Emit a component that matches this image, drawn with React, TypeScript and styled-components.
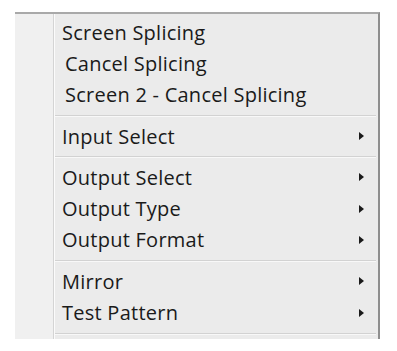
import React from "react";
import styled, { createGlobalStyle } from "styled-components";

const GlobalStyle = createGlobalStyle`
  html, body {
    margin: 0;
    padding: 0;
    background: #ffffff;
  }
  body {
    font-family: "Open Sans", "Noto Sans", sans-serif;
  }
`;

const Page = styled.div`
  width: 397px;
  height: 351px;
  padding: 12px 0 0 15px;
  box-sizing: border-box;
`;

const Menu = styled.div`
  position: relative;
  width: 365px;
  height: 327px;
  box-sizing: border-box;
  background: #ebebeb;
  border-top: 2px solid #a9a9a9;
  border-right: 2px solid #8e8e8e;
  padding: 2.5px 0 0 0;
`;

const Gutter = styled.div`
  position: absolute;
  left: 0;
  top: 0;
  bottom: 0;
  width: 38px;
  background: #f0f0f0;
  border-right: 1px solid #d4d4d4;
  box-shadow: 1px 0 0 #fbfbfb;
`;

const Item = styled.div<{ $indent?: number }>`
  position: relative;
  height: 31.3px;
  display: flex;
  align-items: center;
  justify-content: space-between;
  padding: 0 14px 0 ${(p) => 47 + (p.$indent ?? 0)}px;
  box-sizing: border-box;
  font-size: 20px;
  letter-spacing: 0.25px;
  color: #1a1a1a;
`;

const Arrow = styled.span`
  width: 0;
  height: 0;
  border-top: 4.5px solid transparent;
  border-bottom: 4.5px solid transparent;
  border-left: 5px solid #1a1a1a;
`;

const Separator = styled.div`
  position: relative;
  height: 10px;
  display: flex;
  align-items: center;
  padding: 0 2px 0 40px;
  &::after {
    content: "";
    flex: 1;
    height: 1px;
    background: #d2d2d2;
    box-shadow: 0 1px 0 #f8f8f8;
  }
`;

type Entry = { label: string; sub?: boolean; indent?: number } | "sep";

const entries: Entry[] = [
  { label: "Screen Splicing" },
  { label: "Cancel Splicing", indent: 3 },
  { label: "Screen 2 - Cancel Splicing", indent: 3 },
  "sep",
  { label: "Input Select", sub: true },
  "sep",
  { label: "Output Select", sub: true },
  { label: "Output Type", sub: true },
  { label: "Output Format", sub: true },
  "sep",
  { label: "Mirror", sub: true },
  { label: "Test Pattern", sub: true },
  "sep",
];

export default function App() {
  return (
    <>
      <GlobalStyle />
      <Page>
        <Menu>
          <Gutter />
          {entries.map((e, i) =>
            e === "sep" ? (
              <Separator key={i} />
            ) : (
              <Item key={i} $indent={e.indent}>
                <span>{e.label}</span>
                {e.sub && <Arrow />}
              </Item>
            )
          )}
        </Menu>
      </Page>
    </>
  );
}
